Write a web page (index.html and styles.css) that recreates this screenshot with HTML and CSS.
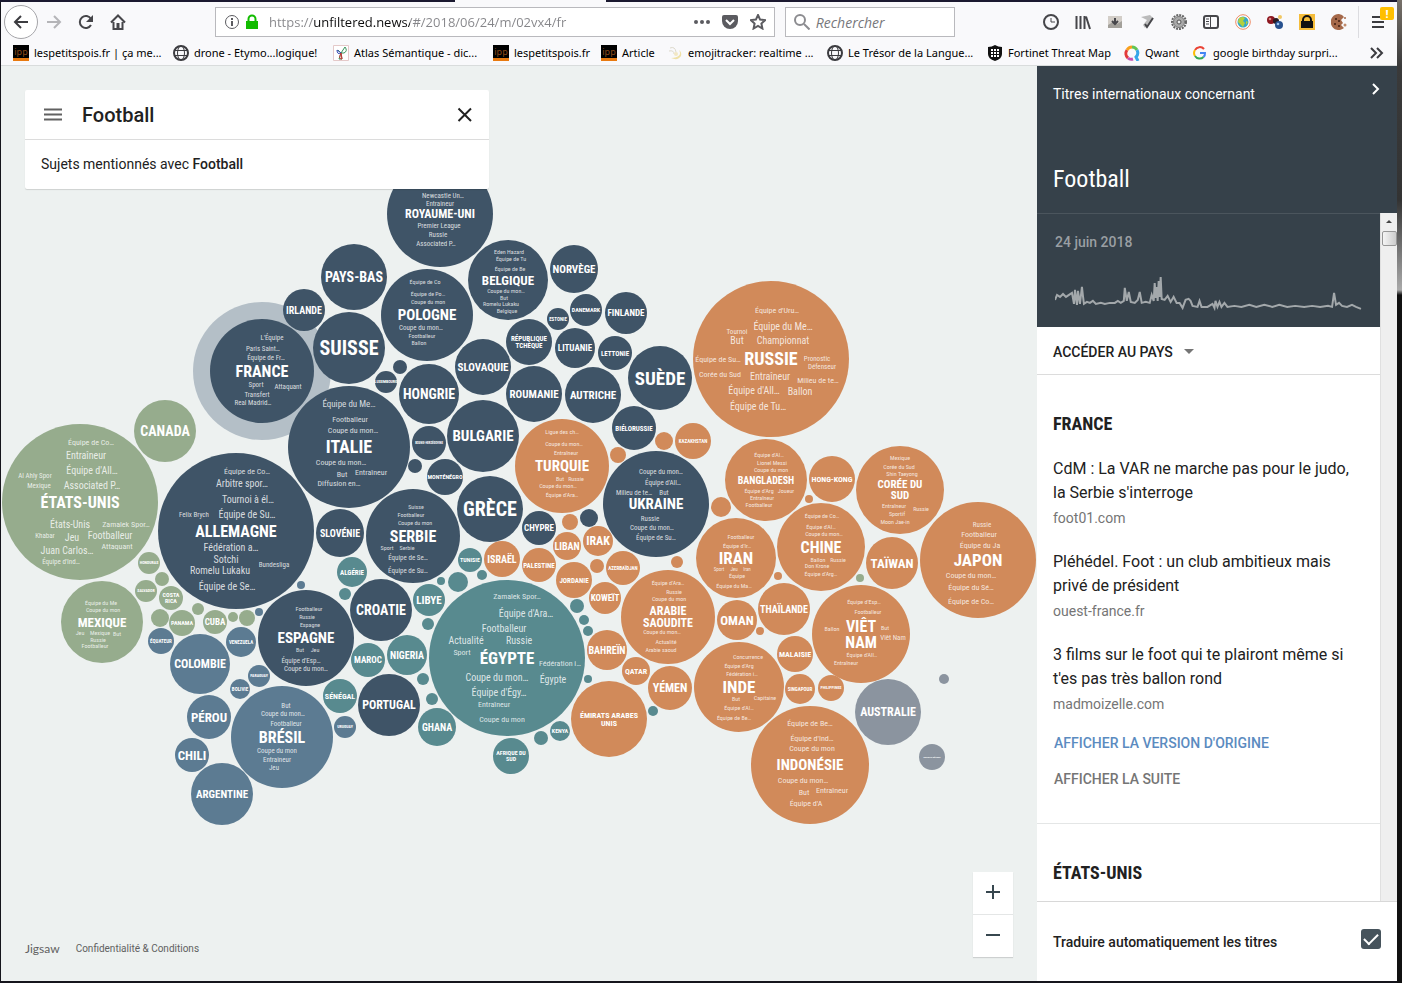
FILE: index.html
```html
<!DOCTYPE html>
<html lang="fr">
<head>
<meta charset="utf-8">
<title>Football - Unfiltered.News</title>
<link rel="stylesheet" href="styles.css">
</head>
<body>
<div class="desktop">
<div class="window">
<header class="chrome">
  <div class="toolbar">
    <nav class="nav-buttons">
      <button class="back" aria-label="Précédent"><svg viewBox="0 0 16 16"><path d="M15 8H2M8 2 2 8l6 6" class="ln2"/></svg></button>
      <button class="tool dim" aria-label="Suivant"><svg viewBox="0 0 16 16"><path d="M1 8h13M8 2l6 6-6 6" class="ln2"/></svg></button>
      <button class="tool" aria-label="Actualiser"><svg viewBox="0 0 16 16"><path d="M13 11a6 6 0 1 1 0-6" class="ln2"/><path d="M15 1v7H8z"/></svg></button>
      <button class="tool" aria-label="Accueil"><svg viewBox="0 0 16 16"><path d="M1 8.500 8 1.500l7 7M3.500 8v7h9V8" class="ln2"/><path d="M6.500 9h3v6h-3z"/></svg></button>
    </nav>
    <div class="urlbar">
      <svg class="i16" viewBox="0 0 16 16"><circle cx="8" cy="8" r="6.500" class="ln1"/><path d="M7 7h2v5H7zM7 4h2v2H7z"/></svg>
      <svg class="i16 lock" viewBox="0 0 16 16"><path d="M4.500 8V5a3.500 3.500 0 0 1 7 0v3" class="ln2"/><path d="M2 7h12v8H2z"/></svg>
      <input class="url" type="text" aria-label="Adresse" value="https://unfiltered.news/#/2018/06/24/m/02vx4/fr">
      <svg class="i16" viewBox="0 0 16 16"><circle cx="2" cy="8" r="2"/><circle cx="8" cy="8" r="2"/><circle cx="14" cy="8" r="2"/></svg>
      <svg class="i16 gapl" viewBox="0 0 16 16"><path d="M2 1h12q2 0 2 2v4a8 8 0 0 1-16 0V3q0-2 2-2z"/><path d="m4 6 4 4 4-4" class="lnw"/></svg>
      <svg class="i16 gapl" viewBox="0 0 16 16"><path d="m8 1 2.100 4.600 5 .5-3.700 3.400 1 5L8 12l-4.400 2.500 1-5L.9 6.100l5-.5z" class="ln2"/></svg>
    </div>
    <label class="search">
      <svg class="i16" viewBox="0 0 16 16"><circle cx="6" cy="6" r="5" class="ln2"/><path d="m10 10 5.500 5.500" class="ln2"/></svg>
      <input type="text" placeholder="Rechercher" aria-label="Rechercher">
    </label>
    <div class="extensions">
      <button class="tool" aria-label="Historique"><svg viewBox="0 0 16 16"><circle cx="8" cy="8" r="7" class="ln2"/><path d="M8 4v4h4" class="ln1"/></svg></button>
      <button class="tool" aria-label="Bibliothèque"><svg viewBox="0 0 16 16"><path d="M1.500 2v13M5.500 2v13M9.500 2v13M11 2.500 15 15" class="ln2"/></svg></button>
      <button class="tool" aria-label="Capture"><svg viewBox="0 0 16 16"><path d="M1 2h14v12H1z" fill="#d3cec8"/><path d="M1 11 6 8l4 2 5-3v7H1z" fill="#a3a09a"/><path d="M8 4v6M5 7l3 3 3-3" class="ln2"/></svg></button>
      <button class="tool" aria-label="Outil"><svg viewBox="0 0 16 16"><path d="m2 3 9-2 3 3-8 10-2-3 4-5z" fill="#bbb"/><path d="m6 10 2 3 6-9" class="ln2"/></svg></button>
      <button class="tool" aria-label="Réglages"><svg viewBox="0 0 16 16"><circle cx="8" cy="8" r="7" fill="none" stroke="#666" stroke-width="2" stroke-dasharray="2 1"/><circle cx="8" cy="8" r="5.500" fill="#aaa" stroke="#777"/><circle cx="8" cy="8" r="2" fill="#eee" stroke="#555"/></svg></button>
      <button class="tool" aria-label="Panneau latéral"><svg viewBox="0 0 16 16"><rect x="1" y="2" width="14" height="12" rx="2" class="ln2"/><path d="M7.500 2v12M3 5h3M3 7.500h3M3 10h3" class="ln1"/></svg></button>
      <button class="tool" aria-label="Globe"><svg viewBox="0 0 16 16"><circle cx="8" cy="8" r="7.300" fill="#fff" stroke="#ee8a64"/><circle cx="8" cy="8" r="5.500" fill="#35a9c8"/><path d="M4 4q4-2 6 0L8 7l2 2-2 4-3-3-2-2zM11 7l2 1-2 3z" fill="#b4cf3e"/></svg></button>
      <button class="tool" aria-label="Bulles"><svg viewBox="0 0 16 16"><circle cx="4" cy="6" r="4" fill="#8d1720"/><circle cx="9" cy="7" r="3" fill="#2a1b22"/><circle cx="12" cy="11" r="4" fill="#27518f"/><circle cx="11" cy="10" r="1.300" fill="#9cc2ee"/><circle cx="3" cy="5" r="1.300" fill="#d98a8a"/><circle cx="13" cy="3" r="2" fill="#f1c864"/></svg></button>
      <button class="tool" aria-label="Cadenas"><svg viewBox="0 0 16 16"><path d="M0 0h16v16H0z" fill="#f5bd3b"/><path d="M4 7V6a4 4 0 0 1 8 0v1" fill="none" stroke="#111" stroke-width="2"/><path d="M2 7h12v7H2z" fill="#111"/></svg></button>
      <button class="tool" aria-label="Cookies"><svg viewBox="0 0 16 16"><path d="M8 0a8 8 0 1 0 5 14l-3-3 2-2-2-3 3-3-2-2z" fill="#a5694a"/><path d="M4 4h2v2H4zM3 9h2v2H3zM7 11h2v2H7zM7 6h2v2H7z" fill="#57301f"/><circle cx="14" cy="4" r="1" fill="#a5694a"/><circle cx="14" cy="11" r="1.500" fill="#c08b6c"/></svg></button>
    </div>
    <button class="menu" aria-label="Menu"><svg viewBox="0 0 16 16"><path d="M2 3h12M2 8h12M2 13h12" class="ln2"/></svg><span class="badge">!</span></button>
  </div>
  <nav class="bookmarks">
    <a href="#"><span class="ipp">ipp</span>lespetitspois.fr | ça me...</a>
    <a href="#"><svg class="i16" viewBox="0 0 16 16"><circle cx="8" cy="8" r="7" class="ln2"/><ellipse cx="8" cy="8" rx="3.500" ry="7" class="ln1"/><path d="M1 5.500h14M1 10.500h14" class="ln1"/></svg>drone - Etymo...logique!</a>
    <a href="#"><svg class="i16" viewBox="0 0 16 16"><path d="M.5.5h15v15H.5z" fill="#fff" stroke="#e4c9c9"/><path d="m5 5 3 3 4-6q3 4-1 6H8l1 6H6l2-6z" fill="none" stroke="#37935a"/><path d="M8 8 4 5q0 5 4 3z" fill="none" stroke="#3d51b5"/><path d="M8 8q-3 6 1 6z" fill="none" stroke="#c33"/></svg>Atlas Sémantique - dic...</a>
    <a href="#"><span class="ipp">ipp</span>lespetitspois.fr</a>
    <a href="#"><span class="ipp">ipp</span>Article</a>
    <a href="#"><svg class="i16" viewBox="0 0 16 16"><path d="M3 3q5-2 6 4M2 6q5-1 5 3" fill="none" stroke="#ddd9cc"/><path d="M12 5q4 7-8 8 7 3 10-2 1-4-2-6z" fill="#efe1a7"/><circle cx="9" cy="9" r="2" fill="#f2e8c4"/></svg>emojitracker: realtime ...</a>
    <a href="#"><svg class="i16" viewBox="0 0 16 16"><circle cx="8" cy="8" r="7" class="ln2"/><ellipse cx="8" cy="8" rx="3.500" ry="7" class="ln1"/><path d="M1 5.500h14M1 10.500h14" class="ln1"/></svg>Le Trésor de la Langue...</a>
    <a href="#"><svg class="i16" viewBox="0 0 16 16"><path d="M1 2q4 0 7-2 3 2 7 2v7q0 5-7 7-7-2-7-7z" fill="#111"/><path d="M4 4h2v2H4zM7 4h2v2H7zM10 4h2v2h-2zM4 7h2v2H4zM7 7h2v2H7zM10 7h2v2h-2zM4 10h2v2H4zM7 10h2v2H7zM10 10h2v2h-2z" fill="#fff"/></svg>Fortinet Threat Map</a>
    <a href="#"><svg class="i16" viewBox="0 0 16 16"><g fill="none" stroke-width="3"><path d="M4 13a6 6 0 0 1-1-8" stroke="#e33b3b"/><path d="M3 5a6 6 0 0 1 5-3" stroke="#f9a01b"/><path d="M8 2a6 6 0 0 1 5 3" stroke="#62c554"/><path d="M13 5a6 6 0 0 1-1 7l2 4" stroke="#35a6e8"/><path d="M4 13q2 2 5 1" stroke="#c64fb0"/></g></svg>Qwant</a>
    <a href="#"><svg class="i16" viewBox="0 0 16 16"><g fill="none" stroke-width="2"><path d="M3 5a5.500 5.500 0 0 1 9-1" stroke="#ea4335"/><path d="M3 11a5.500 5.500 0 0 1 0-6" stroke="#fbbc05"/><path d="M3 11a5.500 5.500 0 0 0 8.500 1" stroke="#34a853"/><path d="M11.500 12A5 5 0 0 0 13 8H8" stroke="#4285f4"/></g></svg>google birthday surpri...</a>
    <button class="more" aria-label="Plus de marque-pages"><svg class="i16" viewBox="0 0 16 16"><path d="m2 3 5 5-5 5M8 3l5 5-5 5" class="ln2"/></svg></button>
  </nav>
</header>
<div class="page">
  <main class="map">
    <svg id="bubbles" class="bubbles" viewBox="1 66 1036 915" role="img" aria-label="Sujets mentionnés avec Football, par pays"></svg>
    <section class="card">
      <div class="card-head">
        <button aria-label="Menu principal"><svg width="20" height="14" viewBox="0 0 20 14"><path d="M1 1.500h18M1 6.500h18M1 11.500h18" stroke="#616161" stroke-width="2"/></svg></button>
        <h1>Football</h1>
        <button aria-label="Fermer"><svg width="16" height="16" viewBox="0 0 16 16"><path d="M1.500 1.500 14 14M14 1.500 1.500 14" stroke="#212121" stroke-width="2"/></svg></button>
      </div>
      <p>Sujets mentionnés avec <strong>Football</strong></p>
    </section>
    <div class="zoom">
      <button aria-label="Zoom avant"><svg width="16" height="16" viewBox="0 0 16 16"><path d="M1 8h14M8 1v14" stroke="#37474f" stroke-width="2"/></svg></button>
      <button aria-label="Zoom arrière"><svg width="16" height="16" viewBox="0 0 16 16"><path d="M1 8h14" stroke="#37474f" stroke-width="2"/></svg></button>
    </div>
    <footer class="legal"><a class="jigsaw" href="#">Jigsaw</a><a href="#">Confidentialité &amp; Conditions</a></footer>
  </main>
  <aside class="side">
    <header class="side-head">
      <div class="side-top"><span>Titres internationaux concernant</span><button aria-label="Masquer"><svg width="10" height="14" viewBox="0 0 10 14"><path d="m2 2 5 5-5 5" fill="none" stroke="#fff" stroke-width="2"/></svg></button></div>
      <h2>Football</h2>
    </header>
    <div class="side-body">
      <div class="feed">
        <div class="trend">
          <time datetime="2018-06-24">24 juin 2018</time>
          <svg viewBox="0 0 308 40" class="spark"><polyline points="0,27 2,22 5,24 8,21 11,24 14,22 17,20 19,31 20,17 22,32 23,18 25,31 27,14 28,23 29,31 32,29 35,30 38,28 41,31 46,30 50,31 55,30 60,30 63,28 66,30 69,28 70,15 72,28 74,19 76,29 80,30 83,27 85,19 87,30 91,29 95,30 97,22 99,28 100,10 101,25 102,14 103,28 104,8 105,24 106,4 107,26 110,27 113,23 116,29 119,24 122,30 125,30 128,35 131,27 134,26 136,28 138,33 143,34 145,28 147,34 153,34 158,31 160,35 161,28 163,34 165,29 167,34 170,30 173,34 180,33 187,34 195,32 202,34 210,32 218,34 225,32 233,34 241,33 250,34 258,33 266,34 274,33 278,34 280,20 282,32 285,30 288,33 293,34 298,32 302,34 307,36"/></svg>
        </div>
        <button class="goto">ACCÉDER AU PAYS<span class="caret"></span></button>
        <section class="country">
          <h3>FRANCE</h3>
          <article><a href="#">CdM : La VAR ne marche pas pour le judo, la Serbie s'interroge</a><cite>foot01.com</cite></article>
          <article><a href="#">Pléhédel. Foot : un club ambitieux mais privé de président</a><cite>ouest-france.fr</cite></article>
          <article><a href="#">3 films sur le foot qui te plairont même si t'es pas très ballon rond</a><cite>madmoizelle.com</cite></article>
          <div class="actions"><button class="primary">AFFICHER LA VERSION D'ORIGINE</button><button>AFFICHER LA SUITE</button></div>
        </section>
        <section class="country"><h3>ÉTATS-UNIS</h3></section>
      </div>
      <div class="scrollbar"><span class="up"></span><span class="thumb"></span></div>
    </div>
    <label class="translate">Traduire automatiquement les titres<input type="checkbox" checked></label>
  </aside>
</div>
</div>
</div>
<script src="bubbles.js"></script>
</body>
</html>
```
FILE: styles.css
```css
* { box-sizing: border-box; }
body { margin: 0; font-family: Roboto, "Liberation Sans", sans-serif; font-size: 14px; color: #212121; background: #111; }
button { border: 0; padding: 0; background: none; font: inherit; color: inherit; cursor: pointer; }
a { color: inherit; text-decoration: none; }
h1, h2, h3, p { margin: 0; }
.desktop { height: 100vh; padding: 2px 5px 2px 1px; background: linear-gradient(#77716a 0, #3a3a3a 66px, #333 200px, #aaa 290px, #111 295px) right / 5px 100% no-repeat, linear-gradient(90deg, #1b1930 455px, #f9f9fb 455px, #f9f9fb 606px, #1b1930 606px) top / 100% 2px no-repeat, #15151c; }
.window { height: 100%; display: flex; flex-direction: column; background: #f9f9fb; }

.chrome { border-bottom: 1px solid #d9dcdc; font-family: "Noto Sans", "Open Sans", sans-serif; color: #000; }
.toolbar { display: flex; align-items: center; height: 40px; padding-left: 3px; }
.ln1, .ln2, .lnw { fill: none; stroke: currentColor; stroke-width: 1; }
.ln2 { stroke-width: 2; }
.lnw { stroke: #fff; stroke-width: 2; }
.toolbar svg, .bookmarks svg { fill: currentColor; display: block; }
.i16, .tool svg, .back svg, .menu svg { width: 16px; height: 16px; flex: none; }
.nav-buttons { display: flex; align-items: center; color: #3c3c40; }
.back { width: 34px; height: 34px; border: 1px solid #a5a5a9; border-radius: 50%; background: #fff; display: grid; place-items: center; }
.tool { width: 32px; height: 32px; display: grid; place-items: center; color: #46464a; }
.dim { color: #b5b5b8; }
.urlbar, .search { display: flex; align-items: center; height: 30px; border: 1px solid #b9b9bd; background: #fff; color: #5b5b60; padding: 0 8px; min-width: 0; }
.urlbar { flex: 541; margin-left: 81px; }
.search { flex: 152; margin-left: 10px; gap: 6px; color: #8c8c90; }
.urlbar input, .search input { flex: 1; min-width: 0; width: 0; border: 0; padding: 0; outline: 0; font: 14px "Open Sans", sans-serif; background: none; }
.search input::placeholder { color: #77777b; font-style: italic; }
.lock { color: #12bc00; margin: 0 9px 0 4px; }
.urlbar .url { font-size: 13px; color: transparent; background: linear-gradient(90deg, #858589 45px, #0c0c0d 45px, #0c0c0d 141px, #858589 141px); -webkit-background-clip: text; background-clip: text; }
.gapl { margin-left: 12px; }
.extensions { display: flex; margin-left: 80px; padding-right: 3px; border-right: 1px solid #dcdce0; }
.menu { position: relative; width: 38px; height: 32px; display: grid; place-items: center; color: #3c3c40; }
.badge { position: absolute; right: 3px; top: 1px; width: 14px; height: 13px; border-radius: 2px; background: #ffbf00; color: #fff; font-size: 11px; line-height: 13px; font-weight: bold; }
.bookmarks { display: grid; grid-template-columns: 160px 160px 160px 108px 66px 160px 160px 137px 68px 1fr 28px; height: 23px; padding: 0 0 2px 12px; align-items: center; font-size: 11px; }
.bookmarks a { display: flex; align-items: center; gap: 5px; white-space: nowrap; min-width: 0; }
.bookmarks svg { color: #3c3c40; }
.ipp { display: grid; place-items: center; width: 16px; height: 16px; background: #000; border-bottom: 3px solid #e87a10; color: #8a4818; font-size: 9px; line-height: 13px; flex: none; }

.page { flex: 1; min-height: 0; display: flex; }
.map { position: relative; flex: 1; min-width: 0; background: #edf1f0; overflow: hidden; }
.bubbles { display: block; width: 100%; height: 100%; font-family: "Roboto Condensed", "Liberation Sans Narrow", Roboto, sans-serif; text-anchor: middle; fill: #fff; }
.bubbles .name { font-weight: 700; }
.bubbles .word { fill-opacity: .8; }
.europe { fill: #3f5467; }
.northam { fill: #96ac8d; }
.southam { fill: #5c7b92; }
.africa { fill: #588a8f; }
.asia { fill: #d18a5a; }
.oceania { fill: #8b949f; }
.halo { fill: #b4bfc7; }
.card { position: absolute; left: 24px; top: 24px; width: 464px; background: #fff; border-radius: 2px; box-shadow: 0 1px 1px #0002; }
.card-head { display: flex; align-items: center; gap: 19px; height: 50px; padding: 0 16px 0 18px; border-bottom: 1px solid #dcdcdc; }
.card-head svg { display: block; }
.card h1 { flex: 1; font-size: 20px; font-weight: 500; }
.card p { padding: 0 16px; line-height: 49px; }
.card strong { font-weight: 500; }
.zoom { position: absolute; right: 24px; bottom: 24px; width: 40px; background: #fff; box-shadow: 0 1px 1px #0002; }
.zoom button { display: grid; place-items: center; width: 100%; height: 42px; padding-bottom: 2px; }
.zoom button + button { border-top: 1px solid #e4e6e6; height: 43px; }
.legal { position: absolute; left: 24px; bottom: 23px; display: flex; align-items: center; gap: 16px; font-size: 10px; line-height: 18px; color: #616161; }
.jigsaw { font: 12px/18px Lato, sans-serif; }

.side { width: 360px; flex: none; display: flex; flex-direction: column; background: #fff; }
.side-head { height: 147px; padding: 16px; background: #36414a; color: #fff; display: flex; flex-direction: column; justify-content: space-between; }
.side-top { display: flex; justify-content: space-between; align-items: flex-start; line-height: 24px; }
.side-top svg { display: block; }
.side h2 { font: 24px/36px "Roboto Condensed", "Liberation Sans Narrow", Roboto, sans-serif; }
.side-body { flex: 1; min-height: 0; display: flex; overflow: hidden; }
.feed { flex: 1; min-width: 0; }
.trend { height: 114px; padding: 19px 18px 0; background: #36414a; border-top: 1px solid #4b555d; }
.trend time { display: block; font-weight: 500; line-height: 18px; color: #9a9fa3; }
.spark { display: block; width: 100%; margin-top: 22px; fill: none; stroke: #a3a8ab; stroke-width: 2; }
.goto { display: flex; align-items: center; gap: 11px; width: 100%; height: 48px; padding: 2px 16px 0; border-bottom: 1px solid #dcdcdc; font-weight: 500; }
.caret { border: 5px solid transparent; border-top-color: #757575; border-bottom: 0; }
.country { padding: 37px 16px 26px; border-bottom: 1px solid #e4e6e6; }
.country h3 { font: 700 18px/24px "Roboto Condensed", "Liberation Sans Narrow", Roboto, sans-serif; padding-bottom: 1px; }
.country article { padding-top: 20px; font-size: 16px; line-height: 24px; }
.country article a { display: block; }
.country cite { display: block; padding-top: 1px; font-style: normal; font-size: 14px; line-height: 24px; color: #757575; }
.actions { display: flex; flex-direction: column; align-items: flex-start; padding: 9px 1px 0; font-weight: 500; color: #757575; }
.actions button { height: 36px; }
.actions .primary { color: #5b8bc0; }
.scrollbar { width: 17px; background: #efefef; border-left: 1px solid #e0e0e0; display: flex; flex-direction: column; align-items: center; }
.up { margin: 7px 0 8px; border: 3px solid transparent; border-bottom-color: #444; border-top: 0; }
.thumb { width: 15px; height: 15px; border: 1px solid #979797; border-radius: 2px; background: linear-gradient(90deg, #f5f5f5, #ccc); }
.translate { display: flex; align-items: center; justify-content: space-between; height: 80px; padding: 0 16px; border-top: 1px solid #d8d8d8; font-weight: 500; }
.translate input { appearance: none; width: 20px; height: 20px; margin: 0 0 6px; border-radius: 3px; background: #46535c; display: grid; place-items: center; }
.translate input::before { content: ""; width: 12px; height: 6px; border: solid #fff; border-width: 0 0 2px 2px; transform: rotate(-45deg) translate(1px, -1px); }
```
FILE: bubbles.js
```js
// Bubble: [region, cx, cy, r, label, label size, words]; word: [x, y, size, text]
var C = "Coupe du mon", CE = C + "…", F = "Footballeur", N = "Entraîneur", Q = "Équipe d";
var bubbles = [
["halo",262,371,69],
["europe",440,214,53,"ROYAUME-UNI",12,[[443,195,7,"Newcastle Un…"],[440,203,7,N],[439,225,7,"Premier League"],[438,234,7,"Russie"],[436,243,7,"Associated P…"]]],
["europe",354,277,33,"PAYS-BAS",14],
["europe",304,310,21,"IRLANDE",10],
["europe",262,371,52,"FRANCE",16,[[272,337,7,"L'Équipe"],[263,348,7,"Paris Saint…"],[266,357,7,Q+"e Fr…"],[256,384,7,"Sport"],[288,386,7,"Attaquant"],[257,394,7,"Transfert"],[253,402,7,"Real Madrid…"]]],
["europe",349,348,36,"SUISSE",20],
["europe",427,315,46,"POLOGNE",15,[[425,282,6,Q+"e Co"],[428,294,6,Q+"e Po…"],[428,302,6,C],[421,327,7,CE],[422,336,6,F],[419,343,6,"Ballon"]]],
["europe",386,382,11,"LUXEMBOURG",4],
["europe",400,367,7],
["europe",429,394,30,"HONGRIE",14],
["europe",483,367,28,"SLOVAQUIE",11],
["europe",508,280,40,"BELGIQUE",13,[[509,252,6,"Eden Hazard"],[511,259,6,Q+"e Tu"],[510,269,6,Q+"e Be"],[506,291,6,CE],[504,298,6,"But"],[501,304,6,"Romelu Lukaku"],[507,311,6,"Belgique"]]],
["europe",574,269,24,"NORVÈGE",11],
["europe",558,319,11,"ESTONIE",5],
["europe",586,310,16,"DANEMARK",6],
["europe",626,313,21,"FINLANDE",9],
["europe",529,342,23,"RÉPUBLIQUE|TCHÈQUE",7],
["europe",575,348,20,"LITUANIE",9],
["europe",615,353,17,"LETTONIE",7],
["europe",660,378,32,"SUÈDE",19],
["europe",534,394,28,"ROUMANIE",11],
["europe",593,395,28,"AUTRICHE",11],
["europe",634,428,22,"BIÉLORUSSIE",7],
["asia",693,441,18,"KAZAKHSTAN",5],
["asia",664,441,9],
["europe",483,436,36,"BULGARIE",15],
["europe",349,447,61,"ITALIE",18,[[349,404,9,Q+"u Me…"],[350,419,8,F],[353,430,8,CE],[341,462,8,CE],[342,474,8,"But"],[371,472,8,N],[339,483,8,"Diffusion en…"]]],
["europe",429,443,17,"BOSNIE-HERZÉGOVINE",3],
["europe",415,466,7],
["europe",445,477,18,"MONTÉNÉGRO",6],
["europe",490,509,33,"GRÈCE",20],
["europe",539,528,17,"CHYPRE",9],
["europe",413,536,47,"SERBIE",16,[[416,507,6,"Suisse"],[411,515,6,F],[415,523,6,C],[387,548,6,"Sport"],[407,548,6,"Serbie"],[408,557,7,Q+"e Se…"],[408,570,7,Q+"e Su…"]]],
["europe",340,533,24,"SLOVÉNIE",10],
["africa",352,572,15,"ALGÉRIE",7],
["africa",470,560,12,"TUNISIE",6],
["asia",502,559,18,"ISRAËL",10],
["asia",539,565,17,"PALESTINE",7],
["asia",567,546,14,"LIBAN",10],
["asia",570,522,8],
["asia",574,580,18,"JORDANIE",7],
["asia",598,541,15,"IRAK",12],
["europe",589,518,9],
["asia",623,568,17,"AZERBAÏDJAN",5],
["asia",597,566,7],
["asia",605,598,16,"KOWEÏT",9],
["africa",577,606,7],["africa",584,620,5],["africa",588,631,5],["africa",588,679,4],
["asia",607,650,20,"BAHREÏN",10],
["asia",636,671,14,"QATAR",8],
["asia",670,688,22,"YÉMEN",12],
["asia",609,719,38,"ÉMIRATS ARABES|UNIS",8],
["africa",653,711,5],
["africa",560,731,10,"KENYA",6],
["africa",541,738,7],
["asia",668,617,47,"ARABIE|SAOUDITE",12,[[668,583,6,Q+"'Ara…"],[674,592,6,"Russie"],[669,599,6,C],[662,632,6,CE],[666,642,6,"Actualité"],[661,650,6,"Arabie saoud"]]],
["europe",656,504,53,"UKRAINE",15,[[661,471,7,CE],[663,482,7,Q+"'All…"],[634,492,7,"Milieu de te…"],[664,492,7,"But"],[650,518,7,"Russie"],[652,527,7,CE],[656,537,7,Q+"e Su…"]]],
["asia",562,466,47,"TURQUIE",15,[[562,432,6,"Ligue des ch…"],[564,444,6,CE],[566,453,6,N],[560,479,6,"But"],[576,479,6,"Russie"],[558,486,6,CE],[562,495,6,Q+"'Ara…"]]],
["asia",618,455,8],["asia",721,507,10],["asia",677,562,6],
["asia",736,558,40,"IRAN",17,[[741,537,6,F],[737,546,6,Q+"'Ir…"],[719,569,5,"Sport"],[734,569,5,"Jeu"],[747,569,5,"Iran"],[737,576,6,"Équipe"],[734,586,6,Q+"u Ma…"]]],
["asia",766,480,41,"BANGLADESH",10,[[769,455,6,Q+"'Al…"],[772,463,6,"Lionel Messi"],[771,470,6,C],[759,491,6,Q+"'Arg"],[786,491,6,"Joueur"],[762,498,6,N],[759,505,6,F]]],
["asia",737,620,20,"OMAN",13],
["asia",784,609,26,"THAÏLANDE",10],
["asia",778,576,4],["asia",760,631,4],
["asia",739,687,45,"INDE",17,[[748,657,6,"Concurrence"],[739,666,6,Q+"'Arg"],[742,674,6,"Fédération i…"],[736,699,6,"But"],[765,698,6,"Capitaine"],[739,708,6,Q+"'Al…"],[734,718,6,Q+"e Be…"]]],
["asia",795,654,18,"MALAISIE",8],
["asia",800,689,15,"SINGAPOUR",5],
["asia",832,479,23,"HONG-KONG",8],
["asia",809,499,4],
["asia",900,490,44,"CORÉE DU|SUD",11,[[900,458,6,"Mexique"],[899,467,6,"Corée du Sud"],[902,474,6,"Shin Taeyong"],[894,506,6,N],[897,514,6,"Sportif"],[921,509,6,"Russie"],[895,522,6,"Moon Jae-in"]]],
["asia",771,359,78,"RUSSIE",18,[[777,310,8,Q+"'Uru…"],[783,326,10,Q+"u Me…"],[737,331,7,"Tournoi"],[737,340,10,"But"],[783,340,10,"Championnat"],[718,359,8,Q+"e Su…"],[817,358,7,"Pronostic"],[822,366,7,"Défenseur"],[720,374,8,"Corée du Sud"],[770,376,10,N],[818,380,8,"Milieu de te…"],[754,390,10,Q+"'All…"],[800,391,10,"Ballon"],[758,406,10,Q+"e Tu…"]]],
["asia",821,547,44,"CHINE",16,[[822,516,6,Q+"e Co…"],[821,527,6,Q+"'Al…"],[824,534,6,CE],[818,560,6,"Ballon"],[838,560,6,"Russie"],[817,566,6,"Don Krone"],[821,574,6,Q+"'Arg…"]]],
["asia",892,563,26,"TAÏWAN",13],
["asia",978,560,58,"JAPON",17,[[982,524,7,"Russie"],[979,534,8,F],[980,545,8,Q+"u Ja"],[971,575,8,CE],[971,587,8,Q+"u Sé…"],[971,601,8,Q+"e Co…"]]],
["northam",860,578,4],
["asia",861,634,49,"VIÊT|NAM",16,[[864,602,6,Q+"'Esp…"],[868,612,6,F],[832,629,6,"Ballon"],[885,628,6,"But"],[893,637,7,"Viêt Nam"],[862,655,6,Q+"'All…"],[846,663,6,N]]],
["asia",831,688,13,"PHILIPPINES",4],
["oceania",888,712,33,"AUSTRALIE",12],
["asia",810,765,59,"INDONÉSIE",15,[[810,723,8,Q+"e Be…"],[812,738,8,Q+"'Ind…"],[812,748,8,C],[803,780,8,CE],[804,792,8,"But"],[832,790,8,N],[806,803,8,Q+"'A"]]],
["oceania",944,679,5],
["oceania",932,757,13,"NOUVELLE-ZÉLANDE",2],
["northam",80,502,78,"ÉTATS-UNIS",16,[[91,442,8,Q+"e Co…"],[86,455,10,N],[92,470,10,Q+"'All…"],[35,475,7,"Al Ahly Spor"],[39,485,7,"Mexique"],[92,485,10,"Associated P…"],[70,524,10,"États-Unis"],[126,524,8,"Zamalek Spor…"],[45,535,7,"Khabar"],[72,537,10,"Jeu"],[110,535,10,F],[117,546,8,"Attaquant"],[67,550,10,"Juan Carlos…"],[61,561,7,Q+"'Ind…"]]],
["northam",165,431,31,"CANADA",14],
["northam",102,622,41,"MEXIQUE",13,[[101,603,6,Q+"u Me"],[103,610,6,C],[80,633,6,"Jeu"],[100,633,6,"Mexique"],[117,634,6,"But"],[98,640,6,"Russie"],[95,646,6,F]]],
["europe",236,531,78,"ALLEMAGNE",16,[[247,471,8,Q+"e Co…"],[242,483,10,"Arbitre spor…"],[248,499,10,"Tournoi à él…"],[194,514,7,"Felix Brych"],[247,514,10,Q+"e Su…"],[231,547,10,"Fédération a…"],[226,559,10,"Sotchi"],[274,564,7,"Bundesliga"],[220,570,10,"Romelu Lukaku"],[227,586,10,Q+"e Se…"]]],
["northam",149,563,11,"HONDURAS",4],
["northam",162,579,7],
["northam",146,591,11,"SALVADOR",4],
["northam",171,598,12,"COSTA|RICA",6],
["northam",198,609,6],
["northam",215,622,12,"CUBA",9],
["northam",160,618,9],
["northam",182,623,13,"PANAMA",6],
["northam",233,617,5],["northam",247,618,8],
["southam",259,612,4],["southam",301,585,4],
["southam",161,641,13,"ÉQUATEUR",5],
["southam",241,642,15,"VENEZUELA",5],
["southam",200,664,30,"COLOMBIE",12],
["europe",306,638,48,"ESPAGNE",15,[[309,609,6,F],[307,617,6,"Russie"],[310,625,6,"Espagne"],[300,650,6,"But"],[315,650,6,"Jeu"],[301,660,7,Q+"'Esp…"],[306,668,7,CE]]],
["southam",259,676,11,"PARAGUAY",4],
["southam",240,689,10,"BOLIVIE",5],
["southam",209,717,22,"PÉROU",13],
["southam",192,755,17,"CHILI",13],
["southam",222,794,31,"ARGENTINE",11],
["southam",282,737,51,"BRÉSIL",16,[[286,705,7,"But"],[283,713,7,CE],[286,723,7,F],[277,750,7,C],[277,759,7,N],[274,767,7,"Jeu"]]],
["southam",345,727,11,"URUGUAY",4],
["africa",340,696,17,"SÉNÉGAL",8],
["africa",368,660,17,"MAROC",9],
["africa",407,655,20,"NIGERIA",10],
["europe",381,610,31,"CROATIE",14],
["europe",389,705,31,"PORTUGAL",12],
["africa",437,727,19,"GHANA",10],
["africa",429,600,16,"LIBYE",11],
["africa",345,594,6],["africa",428,624,6],["africa",423,679,6],["africa",432,699,6],["africa",441,581,4],["africa",458,582,10],["africa",482,575,5],
["africa",507,658,78,"ÉGYPTE",17,[[517,596,8,"Zamalek Spor…"],[526,613,10,Q+"'Ara…"],[504,628,10,F],[466,640,10,"Actualité"],[519,640,10,"Russie"],[462,652,8,"Sport"],[560,663,8,"Fédération i…"],[497,677,10,CE],[553,679,10,"Égypte"],[499,692,10,Q+"'Égy…"],[494,704,8,N],[502,719,8,C]]],
["africa",511,756,18,"AFRIQUE DU|SUD",6]
];
var svg = document.getElementById("bubbles");
function add(tag, attrs, text) {
  var el = document.createElementNS("http://www.w3.org/2000/svg", tag);
  for (var k in attrs) el.setAttribute(k, attrs[k]);
  if (text) el.textContent = text;
  svg.appendChild(el);
}
function write(cls, x, y, size, text) {
  add("text", { "class": cls, x: x, y: Math.round(y + size * 0.36), "font-size": size }, text);
}
bubbles.forEach(function (b) {
  add("circle", { "class": b[0], cx: b[1], cy: b[2], r: b[3] });
  if (!b[4]) return;
  var lines = b[4].split("|");
  lines.forEach(function (line, i) {
    write("name", b[1], b[2] + (i - (lines.length - 1) / 2) * b[5], b[5], line);
  });
  (b[6] || []).forEach(function (w) { write("word", w[0], w[1], w[2], w[3]); });
});
```
